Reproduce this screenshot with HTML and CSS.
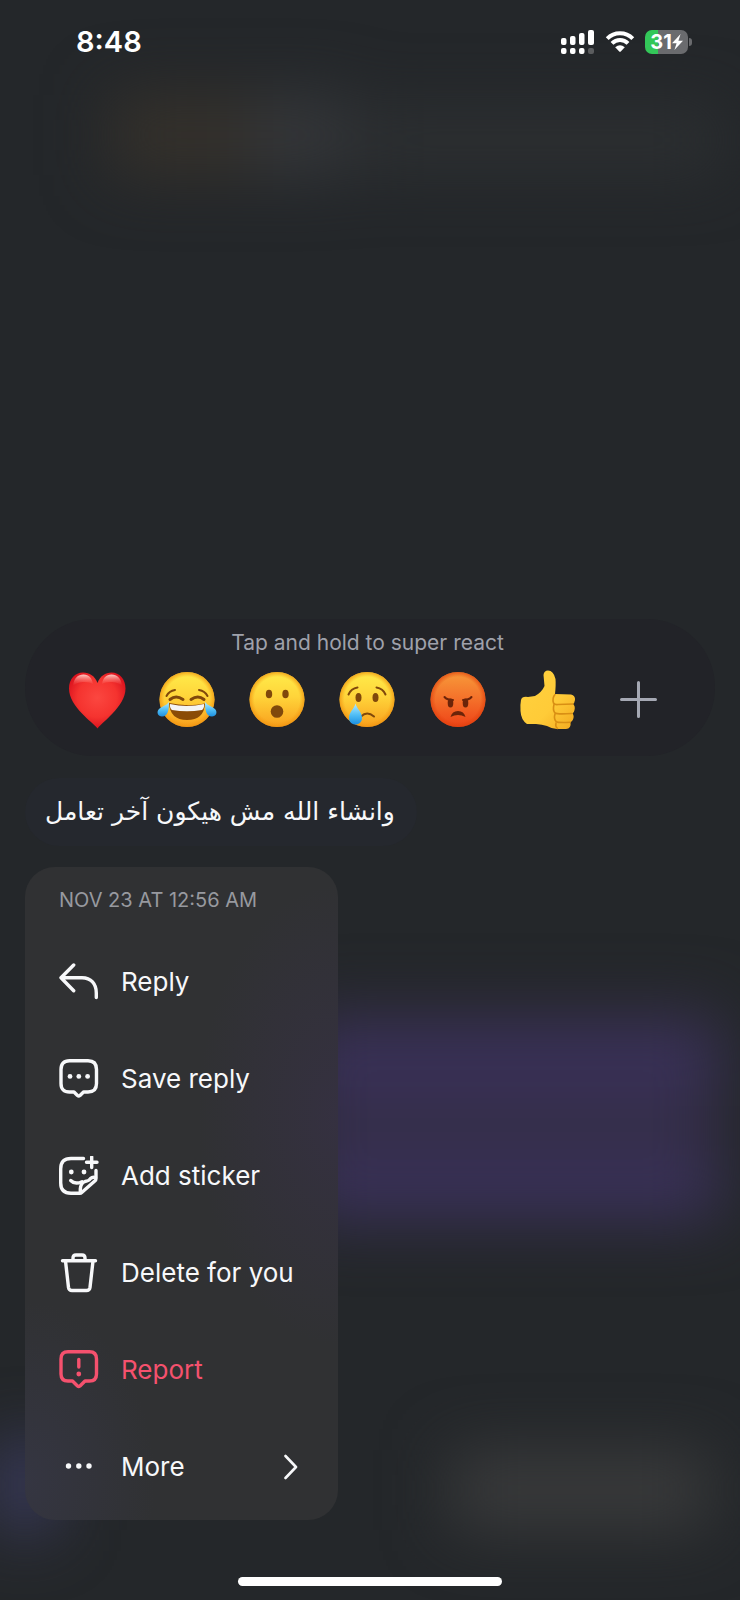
FILE: index.html
```html
<!DOCTYPE html>
<html lang="en">
<head>
    <meta charset="UTF-8">
    <meta name="viewport" content="width=device-width, initial-scale=1.0">
    <title>Message options</title>
    <link rel="stylesheet" href="styles.css">
</head>
<body>

    <!-- Shared gradients for the emoji -->
    <svg class="defs" width="0" height="0" aria-hidden="true">
        <defs>
            <linearGradient id="face" x1="0" y1="0" x2="0" y2="1">
                <stop offset="0" stop-color="#ffec4a" />
                <stop offset="0.45" stop-color="#ffd43a" />
                <stop offset="1" stop-color="#f9a01d" />
            </linearGradient>
            <radialGradient id="faceEdge" cx="0.5" cy="0.5" r="0.5">
                <stop offset="0.82" stop-color="#f39a12" stop-opacity="0" />
                <stop offset="1" stop-color="#ef920f" stop-opacity="0.75" />
            </radialGradient>
            <linearGradient id="angry" x1="0" y1="0" x2="0" y2="1">
                <stop offset="0" stop-color="#f79a3a" />
                <stop offset="0.5" stop-color="#f4702a" />
                <stop offset="1" stop-color="#ee4317" />
            </linearGradient>
            <radialGradient id="angryEdge" cx="0.5" cy="0.5" r="0.5">
                <stop offset="0.82" stop-color="#e0400c" stop-opacity="0" />
                <stop offset="1" stop-color="#e0400c" stop-opacity="0.7" />
            </radialGradient>
            <radialGradient id="heart" cx="0.5" cy="0.45" r="0.58">
                <stop offset="0" stop-color="#fb4740" />
                <stop offset="0.6" stop-color="#f5332f" />
                <stop offset="1" stop-color="#d80f1c" />
            </radialGradient>
            <linearGradient id="shine" x1="0" y1="0" x2="0" y2="1">
                <stop offset="0" stop-color="#ffd5d0" stop-opacity="0.95" />
                <stop offset="1" stop-color="#ff5a50" stop-opacity="0" />
            </linearGradient>
            <linearGradient id="tear" x1="0" y1="0" x2="0" y2="1">
                <stop offset="0" stop-color="#b5ecff" />
                <stop offset="0.55" stop-color="#4fbdf5" />
                <stop offset="1" stop-color="#1c8fe0" />
            </linearGradient>
            <linearGradient id="thumb" x1="0" y1="0" x2="1" y2="1">
                <stop offset="0" stop-color="#ffd23f" />
                <stop offset="0.6" stop-color="#ffcb38" />
                <stop offset="1" stop-color="#f3a91f" />
            </linearGradient>
        </defs>
    </svg>

    <header class="statusBar">
        <time class="clock">8:48</time>
        <div class="indicators">
            <svg class="signal" viewBox="0 0 34 24" aria-hidden="true">
                <rect x="0" y="8" width="5.500" height="7" rx="2" />
                <rect x="9" y="6" width="5.500" height="9" rx="2" />
                <rect x="18" y="3" width="5.500" height="12" rx="2" />
                <rect x="27" y="0" width="6" height="15" rx="2" />
                <rect x="0" y="18" width="5.500" height="6" rx="2" />
                <rect x="9" y="18" width="5.500" height="6" rx="2" />
                <rect x="18" y="18" width="5.500" height="6" rx="2" />
                <rect x="27" y="18" width="6" height="6" rx="2" opacity="0.25" />
            </svg>
            <svg class="wifi" viewBox="0 0 30 24" aria-hidden="true">
                <path class="arc" d="M2.2 8.6A18.2 18.2 0 0 1 27.8 8.6" />
                <path class="arc" d="M7 13.4A11.4 11.4 0 0 1 23 13.4" />
                <path d="M10.2 17.2Q15 13.4 19.8 17.2L15.8 21.5Q15 22.2 14.2 21.5Z" />
            </svg>
            <div class="battery">
                <span class="level">31</span>
                <svg class="bolt" viewBox="0 0 11 16" aria-hidden="true">
                    <path d="M8.6 0L0 9.200H4.600L2.400 16L11 6.800H6.400Z" />
                </svg>
            </div>
            <span class="batteryCap"></span>
        </div>
    </header>

    <main class="overlay">
        <section class="reactions">
            <p class="hint">Tap and hold to super react</p>
            <div class="emojiRow">
                <button class="emoji" aria-label="Love">
                    <svg viewBox="0 0 60 60">
                        <path fill="url(#heart)" d="M30.500 58.500C27 54 21 50 15 43.500C8 36 2 28 2 18.500C2 9 8 2.500 16 2.500C22.500 2.500 28 6 30.500 13C33 6 38.500 2.500 44.500 2.500C52.500 2.500 58.500 9 58.500 18.500C58.500 28 52.500 36 45.500 43.500C39.500 50 34 54 30.500 58.500Z" />
                        <path fill="url(#shine)" d="M6 16C7 8 11 4.500 16.500 4.500C22 4.500 25 8 26 14C22 11 10 11 6 16Z" />
                        <path fill="url(#shine)" d="M35 14C36 8 39 4.500 44.500 4.500C50 4.500 54 8 55 16C51 11 39 11 35 14Z" />
                    </svg>
                </button>
                <button class="emoji" aria-label="Haha">
                    <svg viewBox="0 0 60 60">
                        <circle cx="30" cy="29.500" r="27.500" fill="url(#face)" />
                        <circle cx="30" cy="29.500" r="27.500" fill="url(#faceEdge)" />
                        <g class="brow">
                            <path d="M9.500 26Q12 21 18 20" />
                            <path d="M50.500 26Q48 21 42 20" />
                        </g>
                        <g class="brow thick">
                            <path d="M13 29.500Q19 24.500 26 29.500" />
                            <path d="M34 29.500Q41 24.500 47 29.500" />
                        </g>
                        <path fill="#8a4b06" d="M12 33Q30 37 48 33.500Q47 50 30 50Q13 50 12 33Z" />
                        <path fill="#f4f4f4" d="M13 34Q30 38 47 34Q47.500 38 45 40Q30 42.500 15 40Q12.500 38 13 34Z" />
                        <path fill="url(#tear)" d="M12 32C12 40 11 46.500 5 46.500C1 46.500 -1 42 2 39C4.500 36.500 9 36 12 32Z" />
                        <path fill="url(#tear)" d="M48 32C48 40 49 46.500 55 46.500C59 46.500 61 42 58 39C55.500 36.500 51 36 48 32Z" />
                    </svg>
                </button>
                <button class="emoji" aria-label="Wow">
                    <svg viewBox="0 0 60 60">
                        <circle cx="30" cy="29.500" r="27.500" fill="url(#face)" />
                        <circle cx="30" cy="29.500" r="27.500" fill="url(#faceEdge)" />
                        <ellipse cx="22" cy="24" rx="3.200" ry="4.300" fill="#80480b" />
                        <ellipse cx="38.500" cy="24" rx="3.200" ry="4.300" fill="#80480b" />
                        <circle cx="30" cy="41.500" r="6.300" fill="#80480b" />
                    </svg>
                </button>
                <button class="emoji" aria-label="Sad">
                    <svg viewBox="0 0 60 60">
                        <circle cx="30" cy="29.500" r="27.500" fill="url(#face)" />
                        <circle cx="30" cy="29.500" r="27.500" fill="url(#faceEdge)" />
                        <g class="brow">
                            <path d="M11.500 24.500Q14 18.500 20.500 17.500" />
                            <path d="M48.500 24.500Q46 18.500 39.500 17.500" />
                            <path d="M24 46.500Q30 40.500 37 46.500" />
                        </g>
                        <ellipse cx="21.500" cy="27.500" rx="3" ry="4.500" fill="#80480b" />
                        <ellipse cx="38.500" cy="27.500" rx="3" ry="4.500" fill="#80480b" />
                        <path fill="url(#tear)" d="M18.500 33.500C20 39 25 42 25 48C25 52 22 54.500 18.500 54.500C15 54.500 12 52 12 48C12 42 17 39 18.500 33.500Z" />
                    </svg>
                </button>
                <button class="emoji" aria-label="Angry">
                    <svg viewBox="0 0 60 60">
                        <circle cx="30" cy="29.500" r="27.500" fill="url(#angry)" />
                        <circle cx="30" cy="29.500" r="27.500" fill="url(#angryEdge)" />
                        <ellipse cx="22.500" cy="33" rx="2.800" ry="4.500" fill="#6b2409" />
                        <ellipse cx="37.500" cy="33" rx="2.800" ry="4.500" fill="#6b2409" />
                        <g class="brow dark">
                            <path d="M16.500 27Q19 30 25 30" />
                            <path d="M43.500 27Q41 30 35 30" />
                        </g>
                        <path fill="#6b2409" d="M22.500 47Q24 41 30 41Q36 41 37.500 47Q30 43 22.500 47Z" />
                    </svg>
                </button>
                <button class="emoji" aria-label="Like">
                    <svg viewBox="0 0 60 60">
                        <path fill="url(#thumb)" d="M3 30Q4 26 10 27L17 26Q24 22 26.500 16L25.500 5Q26 0.500 30 0.500Q35.500 0.500 37.500 9Q38 15 37 24L53 24.500Q57.500 25.500 57 30Q56.500 33 55 34Q57.500 36 56.500 40Q56 43 54.500 43.500Q56.500 46 55 49.500Q54 51.500 52.500 52Q53.500 58.500 48 59L39 59Q33 58.500 29 56Q24 54.500 18 54L9 54Q3 50 2.500 41Q2 35 3 30Z" />
                        <g class="knuckles">
                            <path d="M37 24.500Q34 28 35.500 33Q37 35 40 34.500L55 34" />
                            <path d="M36 34.500Q34.500 40 37 43Q39 44.500 54 43.500" />
                            <path d="M37 44Q35.500 48.500 38 51.500Q40 53 52 52.300" />
                            <path d="M38 53Q37 56.500 39.500 58.500" />
                        </g>
                    </svg>
                </button>
                <button class="emoji" aria-label="More reactions">
                    <svg class="plus" viewBox="0 0 60 60">
                        <path d="M13.500 29.500H47.500M30.500 12.500V46.500" />
                    </svg>
                </button>
            </div>
        </section>

        <p class="bubble" dir="rtl" lang="ar">وانشاء الله مش هيكون آخر تعامل</p>

        <nav class="menu">
            <h2 class="menuTime">NOV 23 AT 12:56 AM</h2>
            <button class="menuItem">
                <svg class="icon" viewBox="0 0 40 40">
                    <path d="M14.700 3L2 15.700L14.700 28.700M2 15.700H23C32 15.700 37.300 22 37.300 31V35.500" />
                </svg>
                <span>Reply</span>
            </button>
            <button class="menuItem">
                <svg class="icon" viewBox="0 0 40 40">
                    <path d="M10.500 1.800H29Q37.500 1.800 37.500 10.500V24.500Q37.500 33 29 33H24.500L21 36.500Q19.700 37.500 18.500 36.500L15 33H10.500Q2 33 2 24.500V10.500Q2 1.800 10.500 1.800Z" />
                    <g class="dots">
                        <circle cx="11" cy="17.400" r="2.400" />
                        <circle cx="19.800" cy="17.400" r="2.400" />
                        <circle cx="28.600" cy="17.400" r="2.400" />
                    </g>
                </svg>
                <span>Save reply</span>
            </button>
            <button class="menuItem">
                <svg class="icon" viewBox="0 0 40 40">
                    <path d="M24.500 2.500H12Q1.700 2.500 1.700 13V27Q1.700 37.300 12 37.300H20.500Q22 37.300 23 36.300L35.800 25Q37 24 37 22.500V14.500" />
                    <path d="M21.300 36.500V33Q21.800 27 26 25.500Q30 25 31.500 22.500Q33.500 20.500 36.500 21.500" />
                    <path d="M11.700 24.500Q16 29 23 25.700" />
                    <path d="M32.700 1V11.500M27.500 6.300H38" />
                    <g class="dots">
                        <circle cx="12.300" cy="16" r="2.400" />
                        <circle cx="25" cy="16" r="2.400" />
                    </g>
                </svg>
                <span>Add sticker</span>
            </button>
            <button class="menuItem">
                <svg class="icon" viewBox="0 0 40 40">
                    <path d="M3.500 7.700H36.500M14 7V5Q14 2 17 2H23Q26 2 26 5V7" />
                    <path d="M6.500 8L9.500 34.500Q10 37.500 13 37.500H27.500Q30.500 37.500 31 34.500L34 8" />
                </svg>
                <span>Delete for you</span>
            </button>
            <button class="menuItem danger">
                <svg class="icon" viewBox="0 0 40 40">
                    <path d="M9 1.800H30.500Q37.500 1.800 37.500 9V24Q37.500 31 30.500 31H26L21 36Q19.700 37 18.500 36L13.500 31H9Q2 31 2 24V9Q2 1.800 9 1.800Z" />
                    <path d="M19.800 9.500V17" />
                    <g class="dots">
                        <circle cx="19.800" cy="24" r="2.400" />
                    </g>
                </svg>
                <span>Report</span>
            </button>
            <button class="menuItem">
                <svg class="icon" viewBox="0 0 40 40">
                    <g class="dots">
                        <circle cx="9.500" cy="19" r="2.700" />
                        <circle cx="19.800" cy="19" r="2.700" />
                        <circle cx="30" cy="19" r="2.700" />
                    </g>
                </svg>
                <span>More</span>
                <svg class="chevron" viewBox="0 0 14 26">
                    <path d="M1.500 2L12 13L1.500 24" />
                </svg>
            </button>
        </nav>
    </main>

    <div class="homeBar"></div>

</body>
</html>
```

FILE: styles.css
```css
* {
    box-sizing: border-box;
}

html {
    background-color: #24272a;
}

body {
    position: relative;
    z-index: 0;
    overflow: hidden;
    font-family: Inter, "Liberation Sans", sans-serif;
    color: #f7f8fa;
    margin: 0;
    min-height: 100vh;
    display: flex;
    flex-direction: column;
}

/* Blurred conversation behind the overlay */
body::before {
    content: "";
    position: absolute;
    inset: 0;
    z-index: -1;
    filter: blur(32px);
    background-repeat: no-repeat;
    background-image:
        linear-gradient(#35312b, #35312b),
        linear-gradient(#35373a, #35373a),
        linear-gradient(#2d3032, #2d3032),
        linear-gradient(#3a315a, #3a315a),
        linear-gradient(#3a315a, #3a315a),
        linear-gradient(#322d42, #322d42),
        linear-gradient(#3f3f69, #3f3f69),
        linear-gradient(#393a3b, #393a3b);
    background-size: 140px 80px, 120px 80px, 360px 60px, 420px 70px, 420px 70px, 420px 200px, 50px 90px, 260px 80px;
    background-position:
        left 110px top 95px,
        left 230px top 95px,
        right 20px top 110px,
        right 20px bottom 500px,
        right 20px bottom 380px,
        right 20px bottom 390px,
        left 0 bottom 70px,
        right 30px bottom 70px;
}

.defs {
    position: absolute;
}

.statusBar {
    display: flex;
    justify-content: space-between;
    align-items: center;
    padding: 24px 48px 0 76px;
}

.clock {
    font-size: 29px;
    line-height: 36px;
    font-weight: 600;
    color: #fff;
}

.indicators {
    display: flex;
    align-items: center;
}

.indicators svg {
    fill: #fff;
}

.signal {
    width: 34px;
    height: 24px;
    margin-right: 10px;
}

.wifi {
    width: 30px;
    height: 24px;
    margin-right: 10px;
}

.wifi .arc {
    fill: none;
    stroke: #fff;
    stroke-width: 4;
}

.battery {
    display: flex;
    align-items: center;
    justify-content: center;
    width: 43px;
    height: 24px;
    border-radius: 7px;
    background: linear-gradient(to right, #33c759 31%, #6a6b6e 31%);
}

.level {
    font-size: 20px;
    line-height: 24px;
    font-weight: 700;
    color: #fff;
}

.bolt {
    width: 11px;
    height: 16px;
}

.batteryCap {
    width: 3px;
    height: 8px;
    margin-left: 1px;
    border-radius: 0 3px 3px 0;
    background: #6a6b6e;
}

.overlay {
    flex: 1;
    display: flex;
    flex-direction: column;
    justify-content: flex-end;
    align-items: flex-start;
    padding: 24px 25px 57px;
}

.reactions {
    align-self: stretch;
    padding: 12px 47px 26px 42px;
    border-radius: 68px;
    background: #222328;
}

.hint {
    margin: 0 0 15px;
    font-size: 21px;
    line-height: 24px;
    text-align: center;
    color: #9fa1ab;
}

.emojiRow {
    display: flex;
    justify-content: space-between;
}

button {
    font-family: inherit;
    color: inherit;
    background: none;
    border: none;
    padding: 0;
    cursor: pointer;
}

.emoji svg {
    display: block;
    width: 60px;
    height: 60px;
    overflow: visible;
}

.brow {
    fill: none;
    stroke: #80480b;
    stroke-width: 2;
    stroke-linecap: round;
}

.brow.thick {
    stroke-width: 3;
}

.brow.dark {
    stroke: #6b2409;
}

.knuckles {
    fill: none;
    stroke: #d98f14;
    stroke-width: 1.6;
    stroke-linecap: round;
}

.plus {
    fill: none;
    stroke: #a5a8b3;
    stroke-width: 3;
    stroke-linecap: round;
}

.bubble {
    margin: 22px 0 21px;
    padding: 14px 22px 14px 20px;
    border-radius: 34px;
    background: #25282e;
    font-family: "DejaVu Sans", sans-serif;
    font-size: 25px;
    line-height: 40px;
}

.menu {
    width: 313px;
    padding-bottom: 5px;
    border-radius: 30px;
    background:
        radial-gradient(140px 230px at 100% 38%, rgba(62, 48, 90, 0.35), transparent),
        radial-gradient(130px 180px at 0 94%, rgba(64, 64, 100, 0.3), transparent),
        #303133;
}

.menuTime {
    margin: 0;
    padding: 0 34px;
    font-size: 20px;
    line-height: 66px;
    font-weight: 400;
    color: #97999f;
    white-space: nowrap;
}

.menuItem {
    display: flex;
    align-items: center;
    gap: 22px;
    width: 100%;
    height: 97px;
    padding: 0 40px 0 34px;
    font-size: 26px;
    line-height: 36px;
    text-align: left;
    white-space: nowrap;
}

.icon {
    flex: none;
    width: 40px;
    height: 40px;
    fill: none;
    stroke: currentColor;
    stroke-width: 3.4;
    stroke-linecap: round;
    stroke-linejoin: round;
}

.dots {
    fill: currentColor;
    stroke: none;
}

.danger {
    color: #f5516e;
}

.chevron {
    width: 14px;
    height: 26px;
    margin-left: auto;
    fill: none;
    stroke: currentColor;
    stroke-width: 2.6;
    stroke-linecap: round;
    stroke-linejoin: round;
}

.homeBar {
    align-self: center;
    width: 264px;
    max-width: 60%;
    height: 9px;
    margin-bottom: 14px;
    border-radius: 5px;
    background: #fff;
}
```
